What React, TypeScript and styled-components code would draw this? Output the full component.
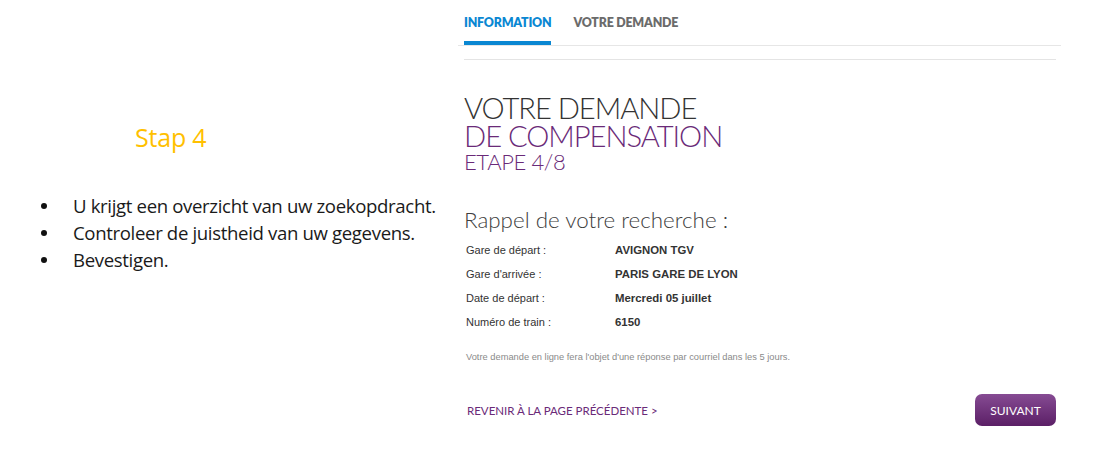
import styled, { createGlobalStyle } from "styled-components";

const GlobalStyle = createGlobalStyle`
  html, body {
    margin: 0;
    padding: 0;
    background: #ffffff;
  }
`

type Row = {
    label: string
    value: string
}

const rows: Row[] = [
    {label: "Gare de départ :", value: "AVIGNON TGV"},
    {label: "Gare d'arrivée :", value: "PARIS GARE DE LYON"},
    {label: "Date de départ :", value: "Mercredi 05 juillet"},
    {label: "Numéro de train :", value: "6150"},
]

const steps = [
    "U krijgt een overzicht van uw zoekopdracht.",
    "Controleer de juistheid van uw gegevens.",
    "Bevestigen.",
]

export default function App() {
    return (
        <>
            <GlobalStyle/>
            <StyledPage>
                <StyledLeft>
                    <StyledStepTitle>Stap 4</StyledStepTitle>
                    <StyledStepList>
                        {steps.map(step => <StyledStepItem key={step}>{step}</StyledStepItem>)}
                    </StyledStepList>
                </StyledLeft>

                <StyledRight>
                    <StyledTabs>
                        <StyledTab $active>INFORMATION</StyledTab>
                        <StyledTab>VOTRE DEMANDE</StyledTab>
                    </StyledTabs>
                    <StyledDivider/>

                    <StyledContent>
                        <StyledTitle>
                            <StyledTitleLine>VOTRE DEMANDE</StyledTitleLine>
                            <StyledTitleLine $purple>DE COMPENSATION</StyledTitleLine>
                            <StyledStep>ETAPE 4/8</StyledStep>
                        </StyledTitle>

                        <StyledRecapTitle>Rappel de votre recherche :</StyledRecapTitle>
                        <StyledTable>
                            {rows.map(row => (
                                <StyledRow key={row.label}>
                                    <StyledLabel>{row.label}</StyledLabel>
                                    <StyledValue>{row.value}</StyledValue>
                                </StyledRow>
                            ))}
                        </StyledTable>

                        <StyledNote>
                            Votre demande en ligne fera l'objet d'une réponse par courriel dans les 5 jours.
                        </StyledNote>

                        <StyledFooter>
                            <StyledBackLink href="#">REVENIR À LA PAGE PRÉCÉDENTE &gt;</StyledBackLink>
                            <StyledNextButton>SUIVANT</StyledNextButton>
                        </StyledFooter>
                    </StyledContent>
                </StyledRight>
            </StyledPage>
        </>
    )
}

const StyledPage = styled.div`
  display: flex;
  width: 1093px;
  height: 457px;
  overflow: hidden;
`

const StyledLeft = styled.div`
  width: 458px;
  flex-shrink: 0;
  padding-top: 117px;
  box-sizing: border-box;
  font-family: "Open Sans", "Noto Sans", sans-serif;
`

const StyledStepTitle = styled.h2`
  margin: 0 0 0 135px;
  font-size: 25px;
  font-weight: 400;
  color: #ffc000;
  line-height: 40px;
  letter-spacing: -0.2px;
`

const StyledStepList = styled.ul`
  list-style: none;
  margin: 35px 0 0 0;
  padding: 0;
`

const StyledStepItem = styled.li`
  position: relative;
  padding-left: 73px;
  font-size: 18.6px;
  line-height: 27px;
  color: #1a1a1a;
  letter-spacing: -0.35px;

  &::before {
    content: "";
    position: absolute;
    left: 41px;
    top: 11px;
    width: 6px;
    height: 6px;
    border-radius: 50%;
    background: #111111;
  }
`

const StyledRight = styled.div`
  width: 603px;
  flex-shrink: 0;
  font-family: "Lato", "Liberation Sans", sans-serif;
`

const StyledTabs = styled.div`
  display: flex;
  gap: 22px;
  padding-left: 6px;
  height: 45px;
  border-bottom: 1px solid #e6e6e6;
`

const StyledTab = styled.div<{ $active?: boolean }>`
  padding-top: 15px;
  box-sizing: border-box;
  height: 45px;
  font-size: 12.4px;
  font-weight: 800;
  letter-spacing: -0.2px;
  color: ${props => props.$active ? "#0a87d2" : "#6b6b6b"};
  border-bottom: 4px solid ${props => props.$active ? "#0a87d2" : "transparent"};
`

const StyledDivider = styled.div`
  margin: 13px 5px 0 6px;
  border-top: 1px solid #e4e4e4;
`

const StyledContent = styled.div`
  padding: 0 5px 0 6px;
`

const StyledTitle = styled.div`
  margin-top: 34px;
  font-weight: 300;
`

const StyledTitleLine = styled.div<{ $purple?: boolean }>`
  font-size: 29.2px;
  line-height: 28px;
  letter-spacing: -1.05px;
  color: ${props => props.$purple ? "#6a2a78" : "#333333"};
`

const StyledStep = styled.div`
  font-size: 22px;
  line-height: 24px;
  letter-spacing: -0.4px;
  color: #6a2a78;
`

const StyledRecapTitle = styled.div`
  margin-top: 33px;
  font-size: 22.4px;
  font-weight: 300;
  color: #3d3d3d;
  line-height: 26px;
`

const StyledTable = styled.div`
  margin-top: 5px;
  font-family: "Liberation Sans", Arial, sans-serif;
  font-size: 11px;
  color: #333333;
`

const StyledRow = styled.div`
  display: grid;
  grid-template-columns: 149px 1fr;
  padding-left: 2px;
  height: 24px;
  align-items: center;
`

const StyledLabel = styled.span`
  font-weight: 400;
`

const StyledValue = styled.span`
  font-weight: 700;
  font-size: 11.4px;
`

const StyledNote = styled.p`
  margin: 18px 0 0 2px;
  font-family: "Liberation Sans", Arial, sans-serif;
  font-size: 9.3px;
  color: #8a8a8a;
`

const StyledFooter = styled.div`
  display: flex;
  justify-content: space-between;
  align-items: center;
  margin-top: 32px;
`

const StyledBackLink = styled.a`
  margin-left: 3px;
  font-size: 11.5px;
  color: #6a2a78;
  text-decoration: none;
`

const StyledNextButton = styled.button`
  width: 81px;
  height: 32px;
  border: none;
  border-radius: 7px;
  background: linear-gradient(#864b93, #5b1f66);
  color: #ffffff;
  font-family: "Lato", "Liberation Sans", sans-serif;
  font-size: 12px;
  font-weight: 400;
`
